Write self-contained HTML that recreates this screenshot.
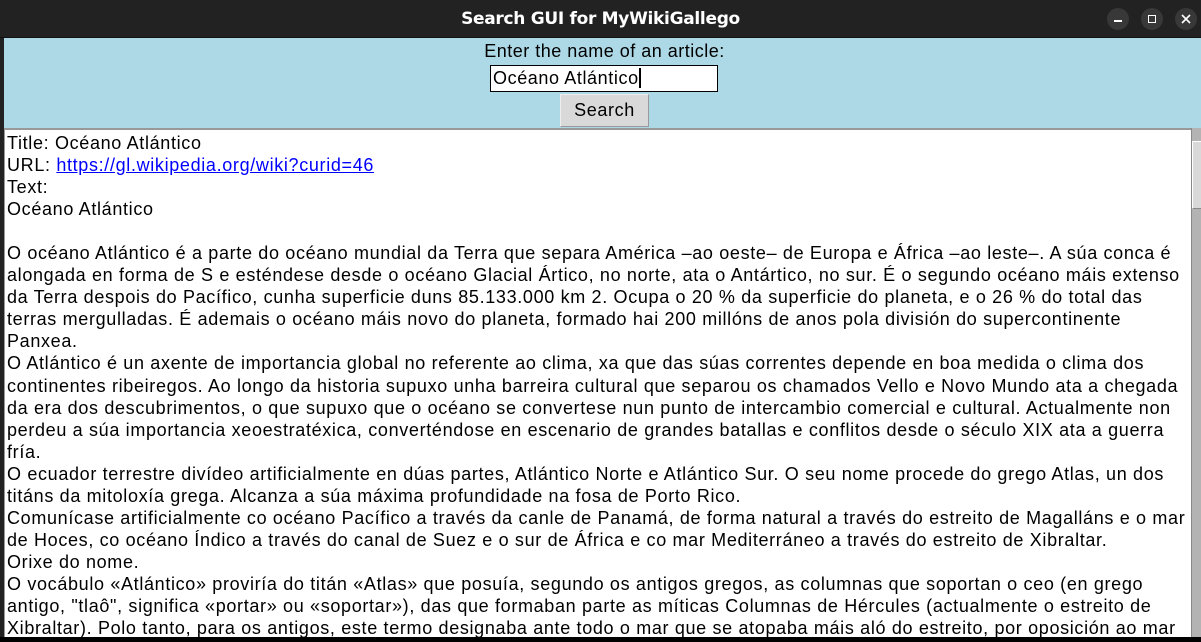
<!DOCTYPE html>
<html><head><meta charset="utf-8"><style>
*{margin:0;padding:0;box-sizing:border-box}
html,body{width:1201px;height:642px;overflow:hidden;background:#222;font-family:"Liberation Sans",sans-serif}
#bar{position:absolute;left:0;top:0;width:1201px;height:38px;background:#222;border-radius:10px 10px 0 0;border-bottom:1px solid #111}
#bar .t{position:absolute;left:0;width:1201px;top:9px;text-align:center;color:#fff;font-weight:bold;font-size:17px;font-family:"DejaVu Sans","Liberation Sans",sans-serif;letter-spacing:-0.3px}
.b{position:absolute;top:8px;width:22px;height:22px;border-radius:50%;background:#383838}
#top{position:absolute;left:4px;top:38px;width:1197px;height:91px;background:#add8e6}
#lbl{position:absolute;left:0;width:1201px;top:41px;text-align:center;font-size:18px;color:#000;letter-spacing:0.5px;padding-left:8px}
#inp{position:absolute;left:490px;top:65px;width:228px;height:27px;border:1px solid #000;background:#fff;font-size:18px;padding:2px 0 0 2px;white-space:pre;letter-spacing:0.6px}
#btn{position:absolute;left:560px;top:94px;width:89px;height:33px;background:#d9d9d9;border:1px solid #999;border-top-color:#eee;border-left-color:#eee;font-size:18px;text-align:center;line-height:31px;letter-spacing:0.6px}
#txt{position:absolute;left:4px;top:128px;width:1187px;height:509px;background:#fff;border-top:2px solid #999;border-left:1px solid #999;overflow:hidden}
#txt pre{font-family:"Liberation Sans",sans-serif;font-size:18px;line-height:22.05px;padding:2px 0 0 2px;color:#000;white-space:pre;letter-spacing:0.66px}
a{color:#00f}
#sb{position:absolute;left:1191px;top:128px;width:10px;height:509px;background:#b3b3b3;border-left:1px solid #888}
#th{position:absolute;left:1192px;top:141px;width:9px;height:68px;background:#d9d9d9;border:1px solid #fff;border-right:none;border-bottom-color:#888}
#bot{position:absolute;left:0;top:637px;width:1201px;height:5px;background:#000}
</style></head><body>
<div id="bar"><div class="t">Search GUI for MyWikiGallego</div>
<div class="b" style="left:1107px"><div style="position:absolute;left:7px;top:12px;width:8px;height:2px;background:#fff"></div></div>
<div class="b" style="left:1141px"><div style="position:absolute;left:7px;top:7px;width:8px;height:8px;border:1.5px solid #fff"></div></div>
<div class="b" style="left:1175px"><svg width="22" height="22" style="position:absolute;left:0;top:0"><path d="M7 7L15 15M15 7L7 15" stroke="#fff" stroke-width="1.6"/></svg></div>
</div>
<div id="top"></div>
<div id="lbl">Enter the name of an article:</div>
<div id="inp">Océano Atlántico<span style="border-left:2px solid #000;margin-left:0"></span></div>
<div id="btn">Search</div>
<div id="txt"><pre>Title: Océano Atlántico
URL: <a href="#">https://gl.wikipedia.org/wiki?curid=46</a>
Text:
Océano Atlántico

O océano Atlántico é a parte do océano mundial da Terra que separa América –ao oeste– de Europa e África –ao leste–. A súa conca é
alongada en forma de S e esténdese desde o océano Glacial Ártico, no norte, ata o Antártico, no sur. É o segundo océano máis extenso
da Terra despois do Pacífico, cunha superficie duns 85.133.000 km 2. Ocupa o 20 % da superficie do planeta, e o 26 % do total das
terras mergulladas. É ademais o océano máis novo do planeta, formado hai 200 millóns de anos pola división do supercontinente
Panxea.
O Atlántico é un axente de importancia global no referente ao clima, xa que das súas correntes depende en boa medida o clima dos
continentes ribeiregos. Ao longo da historia supuxo unha barreira cultural que separou os chamados Vello e Novo Mundo ata a chegada
da era dos descubrimentos, o que supuxo que o océano se convertese nun punto de intercambio comercial e cultural. Actualmente non
perdeu a súa importancia xeoestratéxica, converténdose en escenario de grandes batallas e conflitos desde o século XIX ata a guerra
fría.
O ecuador terrestre divídeo artificialmente en dúas partes, Atlántico Norte e Atlántico Sur. O seu nome procede do grego Atlas, un dos
titáns da mitoloxía grega. Alcanza a súa máxima profundidade na fosa de Porto Rico.
Comunícase artificialmente co océano Pacífico a través da canle de Panamá, de forma natural a través do estreito de Magalláns e o mar
de Hoces, co océano Índico a través do canal de Suez e o sur de África e co mar Mediterráneo a través do estreito de Xibraltar.
Orixe do nome.
O vocábulo «Atlántico» proviría do titán «Atlas» que posuía, segundo os antigos gregos, as columnas que soportan o ceo (en grego
antigo, "tlaô", significa «portar» ou «soportar»), das que formaban parte as míticas Columnas de Hércules (actualmente o estreito de
Xibraltar). Polo tanto, para os antigos, este termo designaba ante todo o mar que se atopaba máis aló do estreito, por oposición ao mar
</pre></div>
<div id="sb"></div><div id="th"></div>
<div id="bot"></div>
</body></html>
